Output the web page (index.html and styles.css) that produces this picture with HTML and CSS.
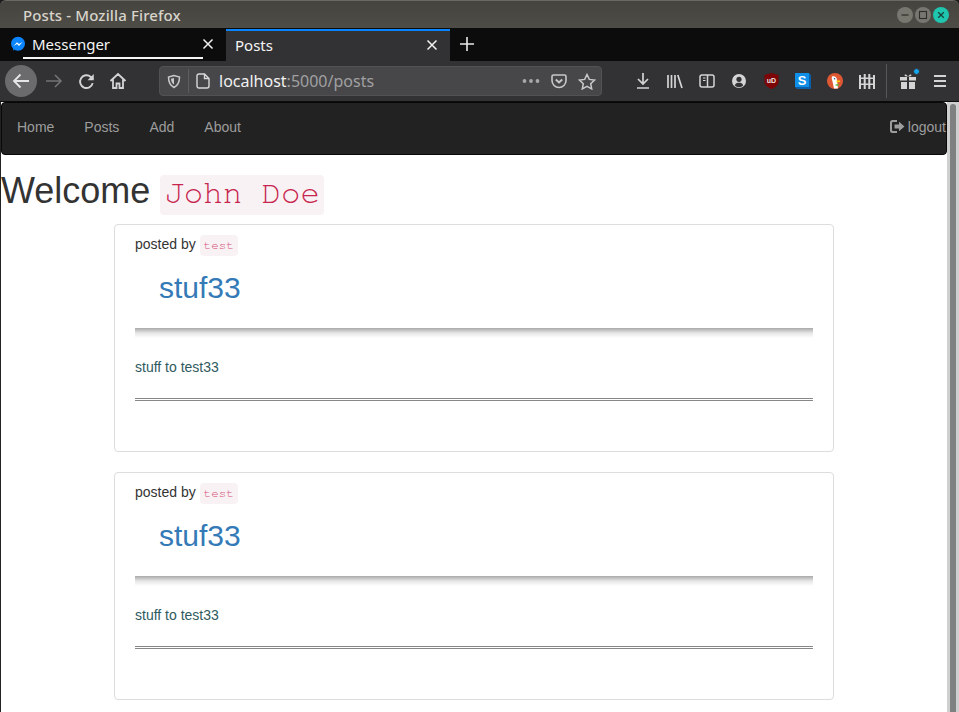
FILE: index.html
```html
<!DOCTYPE html>
<html>
  <head>
    <title>Posts</title>
    <meta charset="utf-8">
    <link rel="stylesheet" href="styles.css">
  </head>
<body>

<div class="titlebar">
  <span class="window-title">Posts - Mozilla Firefox</span>
  <div class="window-buttons">
    <span class="wbtn"><svg width="10" height="10" viewBox="0 0 10 10"><path d="M1.500 5H8.500" stroke="#2e2d2a" stroke-width="1.200"/></svg></span>
    <span class="wbtn"><svg width="10" height="10" viewBox="0 0 10 10"><rect x="1.500" y="1.500" width="7" height="7" fill="none" stroke="#2e2d2a" stroke-width="1.100"/></svg></span>
    <span class="wbtn wbtn-close"><svg width="10" height="10" viewBox="0 0 10 10"><path d="M2.200 2.200L7.800 7.800M7.800 2.200L2.200 7.800" stroke="#17423c" stroke-width="1.300"/></svg></span>
  </div>
</div>

<div class="tabbar">
  <div class="tab">
    <svg class="favicon" width="16" height="16" viewBox="0 0 16 16"><circle cx="8" cy="7.800" r="7" fill="#0a84ff"/><path d="M3 15l.3-3.500 2-.5z" fill="#0a84ff"/><path d="M3.500 10L7 6.200l2 1.800 3.500-2-3.500 3.900-2-1.800z" fill="#fff"/></svg>
    <span class="tab-label">Messenger</span>
    <svg class="tab-close" width="12" height="12" viewBox="0 0 12 12"><path d="M1.500 1.500L10.500 10.500M10.500 1.500L1.500 10.500" stroke="#f2f2f2" stroke-width="1.500"/></svg>
    <i class="tab-playing"></i>
  </div>
  <div class="tab tab-active">
    <span class="tab-label">Posts</span>
    <svg class="tab-close" width="12" height="12" viewBox="0 0 12 12"><path d="M1.500 1.500L10.500 10.500M10.500 1.500L1.500 10.500" stroke="#f2f2f2" stroke-width="1.500"/></svg>
  </div>
  <svg class="new-tab" width="14" height="14" viewBox="0 0 14 14"><path d="M7 0V14M0 7H14" stroke="#e8e8e8" stroke-width="1.600"/></svg>
</div>

<div class="toolbar">
  <span class="back-btn"><svg width="20" height="20" viewBox="0 0 20 20" fill="none" stroke="#e6e6e6" stroke-width="1.800"><path d="M18 10H3M9.500 3.500L3 10l6.500 6.500"/></svg></span>
  <span class="tbtn tbtn-off"><svg width="18" height="18" viewBox="0 0 18 18" fill="none" stroke="currentColor" stroke-width="1.600"><path d="M1 9H16M10 3l6 6-6 6"/></svg></span>
  <span class="tbtn"><svg width="17" height="17" viewBox="0 0 16 16" fill="none" stroke="currentColor" stroke-width="1.800"><path d="M13.800 9.500A6 6 0 1 1 12 3.700L14 6"/><path d="M14.800 1V6.800H9" stroke="none" fill="currentColor"/></svg></span>
  <span class="tbtn"><svg width="18" height="18" viewBox="0 0 18 18" fill="none" stroke="currentColor" stroke-width="1.800"><path d="M1.500 9L9 2l7.500 7M4 7.500V16h3.500v-4.500h3V16H14V7.500"/></svg></span>

  <div class="urlbar">
    <svg class="url-shield" width="14" height="15" viewBox="0 0 14 14" fill="none" stroke="#c8c8c9" stroke-width="1.500"><path d="M7 1L1.500 2.500c0 5 1.500 8.500 5.500 10.500 4-2 5.500-5.500 5.500-10.500z"/><path d="M7 3.500L4 4.300c0 2.500.8 4.500 3 5.700z" fill="#c8c8c9" stroke="none"/></svg>
    <i class="url-sep"></i>
    <svg class="url-page" width="14" height="16" viewBox="0 0 14 16" fill="none" stroke="#d8d8d9" stroke-width="1.400"><path d="M3 1H8.500L13 5.500V13a2 2 0 0 1-2 2H3a2 2 0 0 1-2-2V3a2 2 0 0 1 2-2zM8.500 1V5.500H13"/></svg>
    <span class="url-text">localhost<span class="url-dim">:5000/posts</span></span>
    <span class="url-end">
      <svg width="18" height="4" viewBox="0 0 18 4" fill="#a8a8a9"><circle cx="2.500" cy="2" r="1.900"/><circle cx="9" cy="2" r="1.900"/><circle cx="15.500" cy="2" r="1.900"/></svg>
      <svg width="16" height="15" viewBox="0 0 16 15" fill="none" stroke="#c8c8c9" stroke-width="1.600"><path d="M2.500 1H13.500A1.500 1.500 0 0 1 15 2.500V6.500A7 7 0 0 1 1 6.500V2.500A1.500 1.500 0 0 1 2.500 1z"/><path d="M4.800 5.500L8 8.500l3.200-3" stroke-width="1.900"/></svg>
      <svg width="18" height="17" viewBox="0 0 18 17" fill="none" stroke="#c8c8c9" stroke-width="1.500"><path d="M9 1.500l2.300 4.900 5.200.7-3.800 3.600 1 5.200L9 13.300l-4.700 2.600 1-5.200-3.800-3.600 5.200-.7z"/></svg>
    </span>
  </div>

  <div class="tools">
    <span class="tbtn"><svg width="14" height="16" viewBox="0 0 14 16" fill="none" stroke="currentColor" stroke-width="1.700"><path d="M7 0V10.500M2 6l5 5 5-5M1 15H13"/></svg></span>
    <span class="tbtn"><svg width="16" height="15" viewBox="0 0 16 15" fill="none" stroke="currentColor" stroke-width="1.700"><path d="M1 1V14M4.500 1V14M8 1V14M10.800 1l4.200 13"/></svg></span>
    <span class="tbtn"><svg width="16" height="14" viewBox="0 0 16 14" fill="none" stroke="currentColor" stroke-width="1.500"><rect x="1" y="1" width="14" height="12" rx="2"/><path d="M8.500 1V13"/><path d="M4 4H6.500M4 6.500H6.500" stroke-width="1"/></svg></span>
    <span class="tbtn"><svg width="14" height="14" viewBox="0 0 14 14"><circle cx="7" cy="7" r="7" fill="currentColor"/><circle cx="7" cy="5.300" r="2.600" fill="#323234"/><path d="M2.800 11.500C3.500 9.300 5 8.800 7 8.800s3.500.5 4.200 2.700A6 6 0 0 1 2.800 11.500z" fill="#323234"/></svg></span>
    <span class="tbtn"><svg width="15" height="16" viewBox="0 0 15 16"><path d="M7.500 0L14.500 2V9C14.500 12 11 14.500 7.500 16 4 14.500.5 12 .5 9V2z" fill="#7d0505"/><text x="7.500" y="10" class="ublock-mark">uD</text></svg></span>
    <span class="tbtn"><svg width="16" height="16" viewBox="0 0 16 16"><path d="M0 0H14L16 2V16H2L0 14z" fill="#0a5fa8"/><rect width="14" height="14" fill="#0f8fe8"/><text x="7" y="11.500" class="stylus-mark">S</text></svg></span>
    <span class="tbtn"><svg width="16" height="16" viewBox="0 0 16 16"><circle cx="8" cy="8" r="8" fill="#de5833"/><path d="M5 3.500C7 2.600 9.500 3.500 9.800 6L11 15.500H7L5.500 8.500C4.800 6.500 4.500 5 5 3.500z" fill="#fff"/><circle cx="7.600" cy="5.800" r=".8" fill="#2d4f8e"/><path d="M9.500 7.500h3.500v1.200l-3.500.8z" fill="#fdd20a"/><path d="M8.500 11.500l3-.7v2.400l-3-.6z" fill="#65bc46"/></svg></span>
    <span class="tbtn"><svg width="16" height="15" viewBox="0 0 16 15" fill="currentColor"><rect x="0" y="1" width="2" height="14"/><rect x="4.700" y="0" width="2" height="15"/><rect x="9.300" y="0" width="2" height="15"/><rect x="14" y="1" width="2" height="14"/><rect y="3.500" width="16" height="1.500"/><rect y="9.500" width="16" height="1.500"/></svg></span>
    <i class="tool-sep"></i>
    <span class="tbtn"><svg width="16" height="16" viewBox="0 0 16 16" fill="currentColor"><path d="M0 4H7V7.500H0zM9 4H16V7.500H9zM1 9H7V16H1zM9 9H15V16H9z"/><path d="M8 3.500C6.500 1 4.500 1 4.500 2.300 4.500 3.500 6.500 3.500 8 3.500zM8 3.500c1.500-2.500 3.500-2.500 3.500-1.200C11.500 3.500 9.500 3.500 8 3.500z"/></svg><i class="gift-dot"></i></span>
    <span class="tbtn"><svg width="14" height="12" viewBox="0 0 14 12" stroke="currentColor" stroke-width="1.800"><path d="M1 1H13M1 6H13M1 11H13"/></svg></span>
  </div>
</div>

<div class="viewport">
  <div class="page">
    <nav class="navbar">
      <ul class="nav">
        <li><a>Home</a></li>
        <li><a>Posts</a></li>
        <li><a>Add</a></li>
        <li><a>About</a></li>
      </ul>
      <a class="logout"><svg width="15" height="13" viewBox="0 0 15 13" fill="#9d9d9d"><path d="M0 2.500A2.500 2.500 0 0 1 2.500 0H7V2H3A1 1 0 0 0 2 3V10A1 1 0 0 0 3 11H7V13H2.500A2.500 2.500 0 0 1 0 10.500z"/><path d="M4.500 4.500H9V1.800L14.500 6.500 9 11.200V8.500H4.500z"/></svg> logout</a>
    </nav>

    <h1 class="welcome">Welcome <code>John Doe</code></h1>

    <div class="post">
      <div class="post-by">posted by <code>test</code></div>
      <h2 class="post-title">stuf33</h2>
      <hr class="hr-shadow">
      <p class="post-text">stuff to test33</p>
      <hr class="hr-double">
    </div>

    <div class="post">
      <div class="post-by">posted by <code>test</code></div>
      <h2 class="post-title">stuf33</h2>
      <hr class="hr-shadow">
      <p class="post-text">stuff to test33</p>
      <hr class="hr-double">
    </div>
  </div>
  <div class="scrollbar"><div class="scroll-thumb"></div></div>
</div>

</body>
</html>
```

FILE: styles.css
```css
html, body { margin: 0; padding: 0; height: 100%; overflow: hidden; }
body { width: 959px; height: 712px; background: #1c1c1c; font-family: "Liberation Sans", Arial, sans-serif; font-size: 14px; color: #333; display: flex; flex-direction: column; }

/* window frame */
.titlebar { height: 28px; flex: none; box-sizing: border-box; border-top: 1px solid #6a6963; border-radius: 6px 6px 0 0; background: linear-gradient(#45443f, #4e4c46); display: flex; align-items: center; padding: 0 10px 0 23px; color: #d8d4cb; }
.window-title { font-family: "Noto Sans", sans-serif; font-size: 15px; font-weight: 500; letter-spacing: .13px; }
.window-buttons { margin-left: auto; display: flex; gap: 2px; }
.wbtn { width: 16px; height: 16px; border-radius: 50%; background: #77766f; display: flex; align-items: center; justify-content: center; }
.wbtn-close { background: #1fc5ae; }

/* tabs */
.tabbar { height: 33px; flex: none; background: #0c0c0d; display: flex; align-items: stretch; color: #f5f5f5; }
.tab { width: 226px; box-sizing: border-box; display: flex; align-items: center; padding: 0 12px 2px 11px; position: relative; font-family: "Noto Sans", sans-serif; font-size: 15px; }
.favicon { margin-left: -1px; margin-right: 6px; }
.tab-close { margin-left: auto; }
.tab-playing { position: absolute; left: 23px; top: 29px; width: 180px; height: 2px; background: #f5f5f5; }
.tab-active { width: 224px; padding-left: 9px; background: #323234; border-top: 2px solid #0a84ff; margin-top: 1px; }
.new-tab { margin: 9px 0 0 10px; }

/* toolbar */
.toolbar { height: 41px; flex: none; box-sizing: border-box; background: #323234; display: flex; align-items: center; padding-left: 5px; color: #d4d4d5; border-bottom: 1px solid #0c0c0d; }
.tbtn { width: 32px; height: 32px; display: flex; align-items: center; justify-content: center; position: relative; flex: none; }
.tbtn-off { color: #737375; margin-left: 1px; }
.back-btn { width: 32px; height: 32px; border-radius: 50%; background: #6b6b6d; display: flex; align-items: center; justify-content: center; flex: none; }
.urlbar { width: 443px; height: 30px; box-sizing: border-box; margin-left: 25px; background: #474749; border: 1px solid #525254; border-radius: 4px; display: flex; align-items: center; flex: none; }
.url-shield { margin-left: 7px; }
.url-sep { width: 1px; height: 24px; background: #5e5e60; margin: 0 7px; }
.url-page { margin-right: 9px; }
.url-text { font-family: "Noto Sans", sans-serif; font-size: 16px; color: #f0f0f0; }
.url-dim { color: #a0a0a2; }
.url-end { margin-left: auto; margin-right: 5px; display: flex; align-items: center; gap: 11px; }
.tools { margin-left: 25px; display: flex; align-items: center; }
.tool-sep { width: 1px; height: 34px; background: #58585a; margin: 0 5px 0 3px; }
.gift-dot { position: absolute; right: 4px; top: 3px; width: 5px; height: 5px; border-radius: 50%; background: #12a5ee; border: 1px solid #323234; }
.ublock-mark { font-family: "Liberation Sans", sans-serif; font-size: 7px; font-weight: 700; fill: #f0e6e6; text-anchor: middle; }
.stylus-mark { font-family: "Liberation Sans", sans-serif; font-size: 13px; font-weight: 700; fill: #fff; text-anchor: middle; }

/* page */
.viewport { flex: 1; display: flex; background: #fff; min-height: 0; }
.page { width: 947px; box-sizing: border-box; border-left: 1px solid #222; overflow: hidden; flex: none; }
.scrollbar { width: 12px; background: #cfcfcf; padding: 2px 3px 0; box-sizing: border-box; flex: none; }
.scroll-thumb { height: 100%; background: #7e8180; border-radius: 3px 3px 0 0; }

.navbar { height: 53px; box-sizing: border-box; background: #222; border: 1px solid #080808; border-radius: 4px; margin-bottom: 16px; display: flex; justify-content: space-between; line-height: 20px; color: #9d9d9d; }
.nav { list-style: none; margin: 0; padding: 0; display: flex; }
.nav a { display: block; padding: 14px 15px 16px; }
.logout { padding: 13px 0 17px; white-space: nowrap; display: flex; align-items: center; gap: 3px; }

code { font-family: "Nimbus Mono PS", "FreeMono", "Liberation Mono", "Courier New", monospace; font-size: 90%; font-weight: 400; color: #c7254e; background: #f9f2f4; padding: 2px 4px 6px; border-radius: 4px; }
.post-by code { color: #d4507a; padding: 4px 4px; }
.welcome { font-size: 36px; font-weight: 500; line-height: 1.1; margin: 0 0 12px; }

.post { width: 720px; height: 228px; box-sizing: border-box; margin: 0 0 20px 113px; border: 1px solid #ddd; border-radius: 4px; padding: 9px 20px 0; background: #fff; }
.post-by { line-height: 20px; }
.post-title { font-size: 30px; font-weight: 500; line-height: 33px; color: #337ab7; margin: 15px 0 0 24px; }
.hr-shadow { height: 10px; border: 0; margin: 24px 0 0; background: linear-gradient(#a8a8a8, #e6e6e6 50%, #fff); }
.post-text { margin: 19px 0 0; line-height: 20px; color: #2f5a60; }
.hr-double { height: 0; border: 0; border-top: 3px double #888; margin: 21px 0 0; }
```
